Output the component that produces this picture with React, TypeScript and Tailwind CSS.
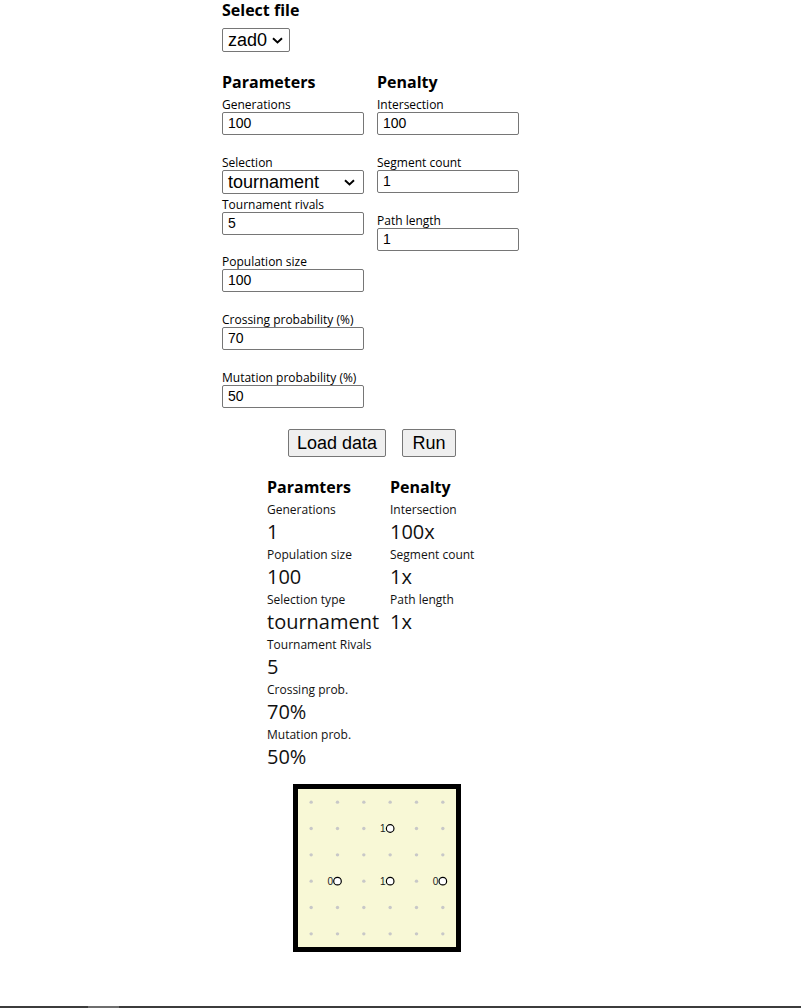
import React from "react";

const ui = { fontFamily: '"Open Sans", "Noto Sans", sans-serif' };
const ctl = { fontFamily: '"Liberation Sans", Arial, sans-serif' };

const Chevron = () => (
  <svg width="11" height="7" viewBox="0 0 11 7" className="shrink-0">
    <path d="M1 1.2 L5.5 5.5 L10 1.2" fill="none" stroke="#000" strokeWidth="1.9" />
  </svg>
);

const Field = ({
  label,
  value,
  gap,
}: {
  label: string;
  value: string;
  gap: string;
}) => (
  <div className={gap}>
    <div className="text-[12px] leading-[15px] pt-[1px]" style={ui}>
      {label}
    </div>
    <div
      className="h-[23px] w-[142px] border border-[#767676] rounded-[2px] px-[5px] text-[14px] leading-[21px] bg-white"
      style={ctl}
    >
      {value}
    </div>
  </div>
);

const Stat = ({ label, value }: { label: string; value: string }) => (
  <div>
    <div className="text-[12px] leading-[17px] text-[#111]">{label}</div>
    <div className="text-[20px] leading-[28px] text-[#111]">{value}</div>
  </div>
);

const points = [
  { c: 3, r: 1, t: "1" },
  { c: 1, r: 3, t: "0" },
  { c: 3, r: 3, t: "1" },
  { c: 5, r: 3, t: "0" },
];

const Board = () => {
  const step = 158 / 6;
  const pos = (i: number) => (i + 0.5) * step;
  const cells = [0, 1, 2, 3, 4, 5];
  return (
    <svg width="158" height="158" viewBox="0 0 158 158" className="block">
      <rect width="158" height="158" fill="#f8f8d6" />
      {cells.map((r) =>
        cells.map((c) => (
          <circle key={`${r}-${c}`} cx={pos(c)} cy={pos(r)} r="1.7" fill="#c8c8c8" />
        ))
      )}
      {points.map((p, i) => (
        <g key={i}>
          <rect x={pos(p.c) - 12} y={pos(p.r) - 6} width="18" height="12" fill="#f8f8d6" />
          <text
            x={pos(p.c) - 4.5}
            y={pos(p.r) + 3.5}
            textAnchor="end"
            fontSize="10"
            fill="#222"
            style={ctl}
          >
            {p.t}
          </text>
          <circle cx={pos(p.c)} cy={pos(p.r)} r="3.8" fill="#fff" stroke="#000" strokeWidth="1.2" />
        </g>
      ))}
    </svg>
  );
};

export default function App() {
  return (
    <div className="min-h-[1008px] flex flex-col bg-white text-black" style={ui}>
      <div className="ml-[222px] w-[300px]">
        <h2 className="text-[16px] leading-[20px] font-bold">Select file</h2>
        <div
          className="mt-[8px] h-[24px] w-[68px] border border-[#767676] rounded-[2px] pl-[5px] pr-[6px] flex items-center justify-between text-[18px]"
          style={ctl}
        >
          <span>zad0</span>
          <Chevron />
        </div>

        <div className="mt-[18px] flex">
          <div className="w-[155px]">
            <h3 className="text-[16px] leading-[24px] font-bold mb-[2px]">Parameters</h3>
            <Field label="Generations" value="100" gap="" />
            <div className="mt-[19px]">
              <div className="text-[12px] leading-[15px] pt-[1px]">Selection</div>
              <div
                className="h-[24px] w-[142px] border border-[#767676] rounded-[2px] pl-[5px] pr-[8px] flex items-center justify-between text-[18px]"
                style={ctl}
              >
                <span>tournament</span>
                <Chevron />
              </div>
            </div>
            <Field label="Tournament rivals" value="5" gap="mt-[2px]" />
            <Field label="Population size" value="100" gap="mt-[18px]" />
            <Field label="Crossing probability (%)" value="70" gap="mt-[19px]" />
            <Field label="Mutation probability (%)" value="50" gap="mt-[19px]" />
          </div>
          <div>
            <h3 className="text-[16px] leading-[24px] font-bold mb-[2px]">Penalty</h3>
            <Field label="Intersection" value="100" gap="" />
            <Field label="Segment count" value="1" gap="mt-[19px]" />
            <Field label="Path length" value="1" gap="mt-[19px]" />
          </div>
        </div>

        <div className="mt-[21px] flex justify-center gap-[16px]" style={ctl}>
          <button className="h-[28px] w-[98px] border border-[#767676] rounded-[2px] bg-[#efefef] text-[18px]">
            Load data
          </button>
          <button className="h-[28px] w-[54px] border border-[#767676] rounded-[2px] bg-[#efefef] text-[18px]">
            Run
          </button>
        </div>

        <div className="mt-[18px] mx-auto w-[210px] flex">
          <div className="w-[123px] whitespace-nowrap">
            <h3 className="text-[16px] leading-[24px] font-bold mb-[2px]">Paramters</h3>
            <Stat label="Generations" value="1" />
            <Stat label="Population size" value="100" />
            <Stat label="Selection type" value="tournament" />
            <Stat label="Tournament Rivals" value="5" />
            <Stat label="Crossing prob." value="70%" />
            <Stat label="Mutation prob." value="50%" />
          </div>
          <div className="w-[87px] whitespace-nowrap">
            <h3 className="text-[16px] leading-[24px] font-bold mb-[2px]">Penalty</h3>
            <Stat label="Intersection" value="100x" />
            <Stat label="Segment count" value="1x" />
            <Stat label="Path length" value="1x" />
          </div>
        </div>

        <div className="mt-[13px] ml-[71px] w-fit border-[5px] border-black">
          <Board />
        </div>
      </div>

      <div className="mt-auto h-[2px] bg-[#3c3c3c] flex">
        <div className="ml-[88px] w-[31px] bg-[#6e6e6e]" />
      </div>
    </div>
  );
}
